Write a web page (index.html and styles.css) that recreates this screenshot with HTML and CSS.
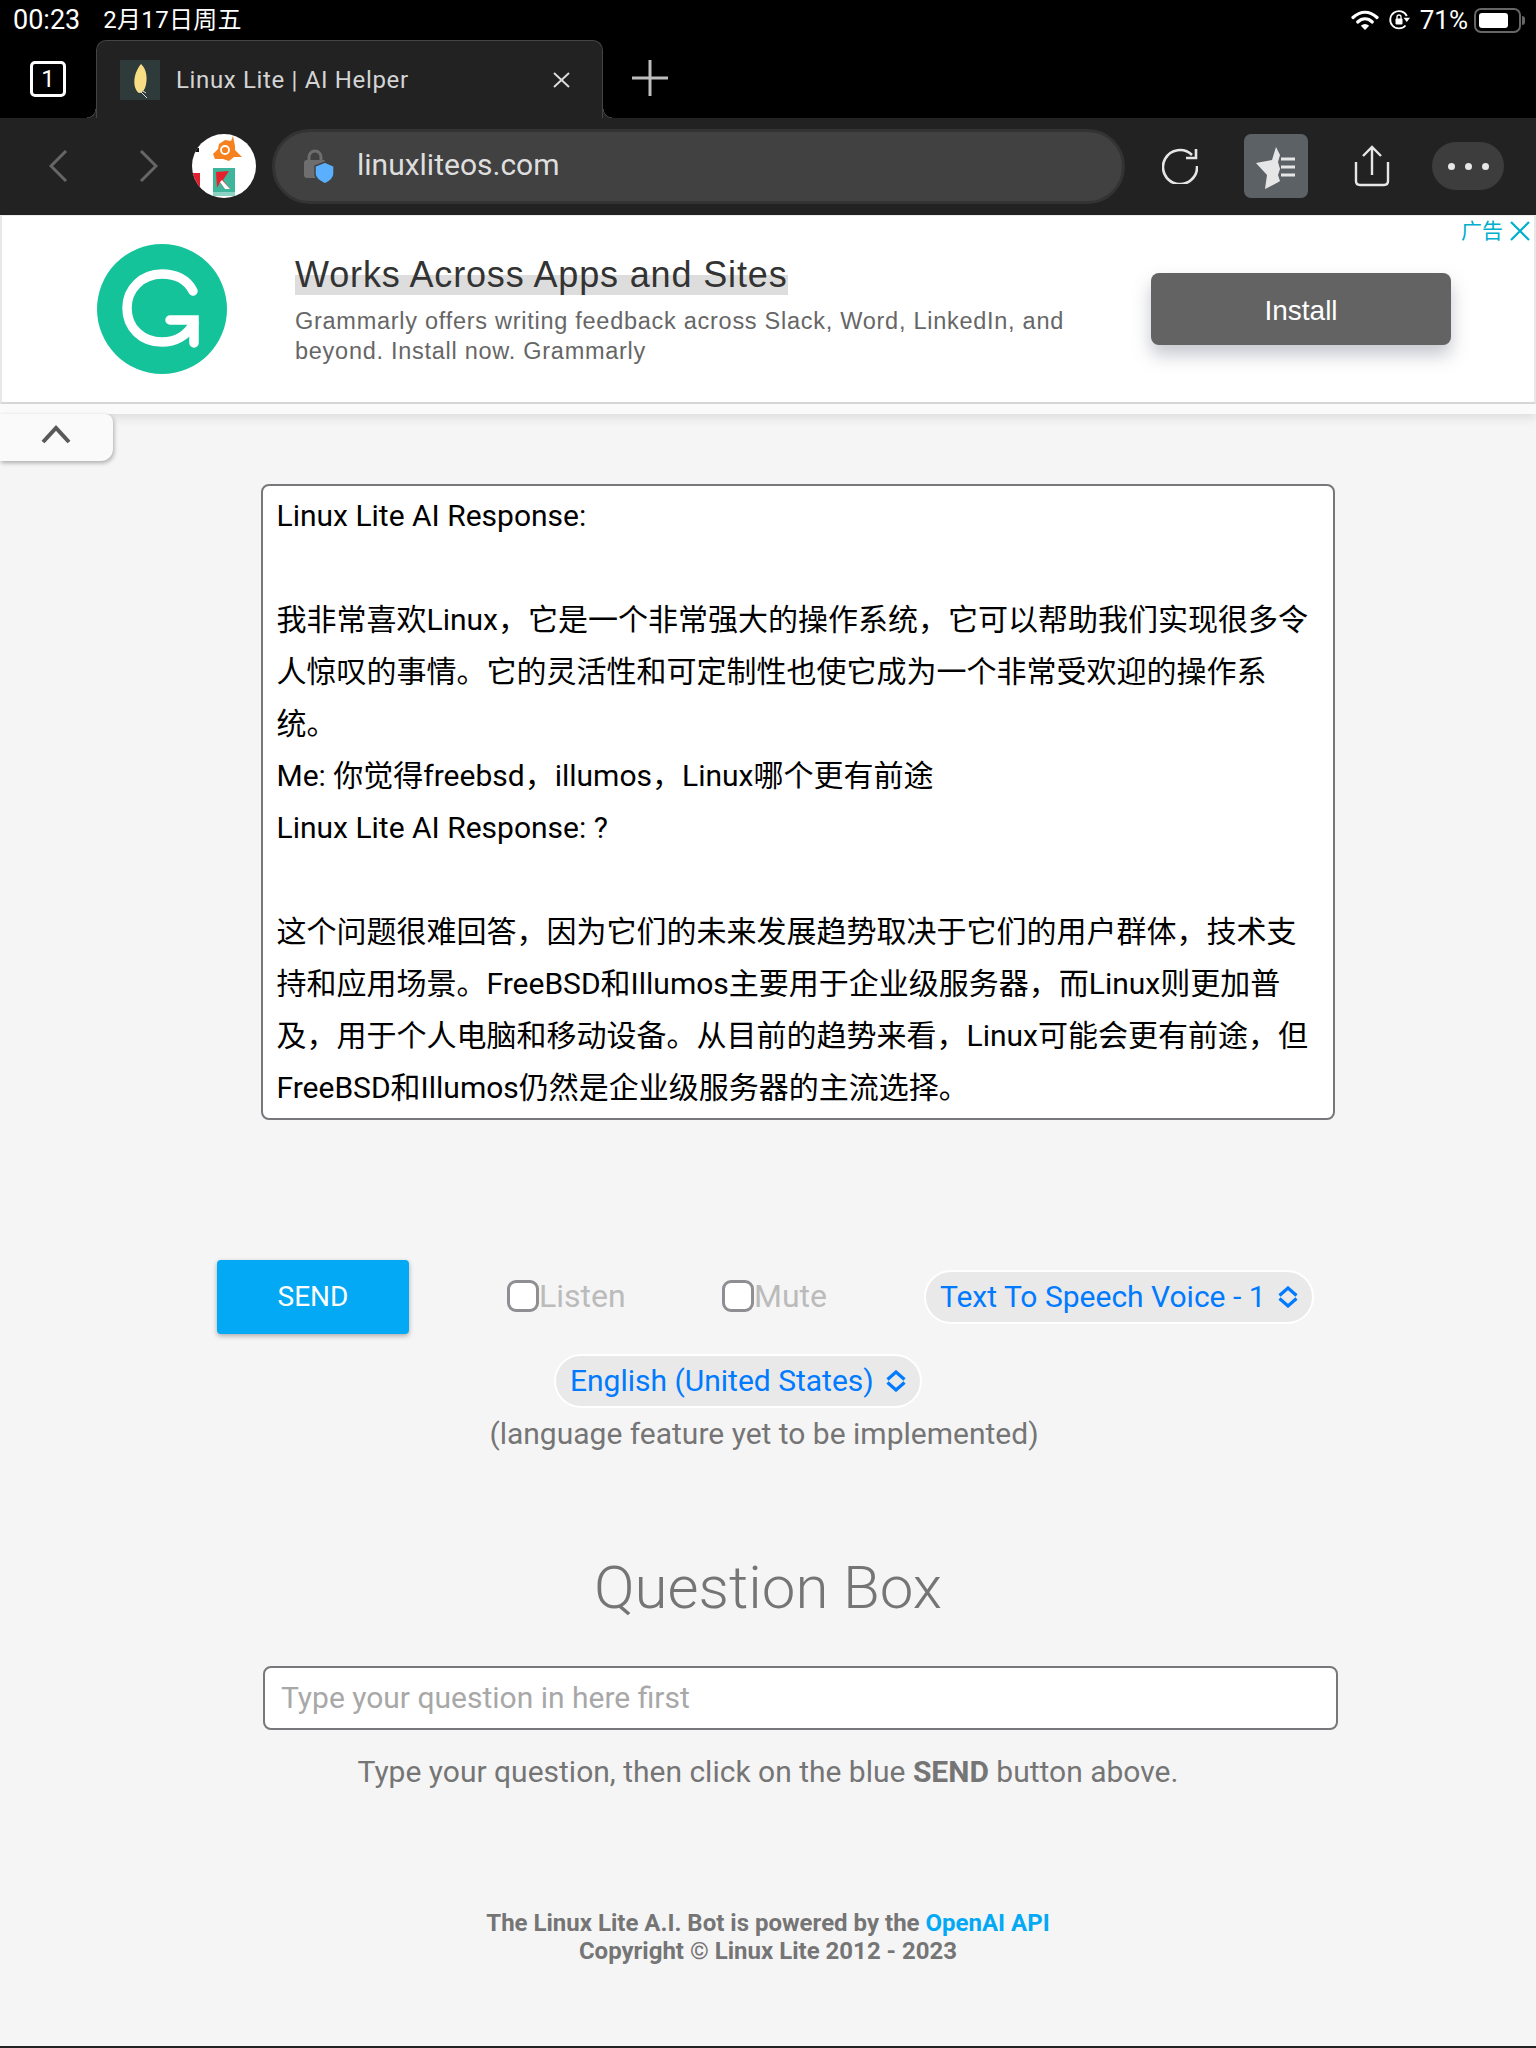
FILE: index.html
```html
<!DOCTYPE html>
<html lang="zh">
<head>
<meta charset="utf-8">
<title>Linux Lite | AI Helper</title>
<link rel="stylesheet" href="styles.css">
</head>
<body>
<div class="status">
  <div class="status-time"><span class="clock">00:23</span><span class="date">2月17日周五</span></div>
  <div class="status-right">
    <svg class="ico-wifi" viewBox="0 0 28 22"><path d="M2 8.500C9.500 1.500 18.500 1.500 26 8.500" fill="none" stroke="#fff" stroke-width="3.200" stroke-linecap="round"/><path d="M6.700 13C11.200 8.900 16.800 8.900 21.300 13" fill="none" stroke="#fff" stroke-width="3.200" stroke-linecap="round"/><path d="M9.800 16.800Q14 13 18.200 16.800L14 21Z" fill="#fff"/></svg>
    <svg class="ico-rot" viewBox="0 0 22 22"><path d="M17.500 16.500A8.700 8.700 0 1 1 18.800 7" fill="none" stroke="#fff" stroke-width="1.800"/><path d="M15.500 8.800H22L18.800 13Z" fill="#fff"/><rect x="7.500" y="9.500" width="7" height="6" rx="1" fill="#fff"/><path d="M9 10V8a2 2 0 0 1 4 0v2" fill="none" stroke="#fff" stroke-width="1.300"/></svg>
    <span class="pct">71%</span>
    <div class="battery"><div class="battery-fill"></div></div>
    <div class="battery-nub"></div>
  </div>
</div>

<div class="tabs">
  <div class="tab-count">1</div>
  <div class="tab">
    <div class="favicon"><svg viewBox="0 0 40 40"><path d="M21 4C27 9 28 20 25 28C24 31 21 33 19 33C13 29 12 15 21 4Z" fill="#f7dd84"/><path d="M19 30L27 38M23 31L26 33" stroke="#ddd" stroke-width="1"/></svg></div>
    <span class="tab-title">Linux Lite | AI Helper</span>
    <svg class="tab-close" viewBox="0 0 17 16"><path d="M1 1L16 15M16 1L1 15" stroke="#ddd" stroke-width="1.900"/></svg>
  </div>
  <svg class="tab-plus" viewBox="0 0 36 36"><path d="M18 0V36M0 18H36" stroke="#bdbdbd" stroke-width="3"/></svg>
</div>

<div class="toolbar">
  <svg class="chev chev-back" viewBox="0 0 19 32"><path d="M17 1L2 16L17 31" fill="none" stroke="#666" stroke-width="3"/></svg>
  <svg class="chev chev-fwd" viewBox="0 0 19 32"><path d="M2 1L17 16L2 31" fill="none" stroke="#666" stroke-width="3"/></svg>
  <div class="ext">
    <svg viewBox="0 0 64 64">
      <rect x="3" y="14" width="4" height="4" fill="#111"/>
      <rect x="0" y="39" width="8" height="15" fill="#e0202c"/>
      <path d="M33 6L39 7L41 2L43 12L43 16L50 23L42 23L37 27L31 25L23 25L21 20L26 15L27 10Z" fill="#f5821f"/>
      <circle cx="33" cy="16" r="4" fill="none" stroke="#fff" stroke-width="1.800"/>
      <rect x="21" y="34" width="22" height="24" fill="#3fb59c"/>
      <path d="M24 38L37 37L31 46L38 55L33 55L28 48L25 54Z" fill="#e8202c"/>
      <path d="M30 46L38 55L33 55L28 48Z" fill="#fff"/>
      <rect x="21" y="58" width="22" height="4" fill="#3fb59c" opacity="0.600"/>
    </svg>
  </div>
  <div class="url">
    <svg class="lock" viewBox="0 0 30 35"><rect x="0" y="11" width="22" height="18" rx="3" fill="#6e6e6e"/><path d="M5 12V8a6 6 0 0 1 12 0v4" fill="none" stroke="#6e6e6e" stroke-width="3"/><path d="M21 13L30 17V25C30 30 25 33 21 35C17 33 11 30 11 25V17Z" fill="#5ab0ff" stroke="#414141" stroke-width="1.500"/></svg>
    <span class="url-text">linuxliteos.com</span>
  </div>
  <svg class="reload" viewBox="0 0 36 36"><path d="M30 7A17 17 0 1 0 35 18" fill="none" stroke="#e6e6e6" stroke-width="2.600"/><path d="M24 10H34V1" fill="none" stroke="#e6e6e6" stroke-width="2.600"/></svg>
  <div class="star-btn">
    <svg viewBox="0 0 64 64"><path d="M32 13L28 26L12 29L23 41L21 55C27 52 33 49 36 47L34 41L36 35L34 28L36 21Z" fill="#e6e6e6"/><path d="M37 25H51M37 33H51M37 41H51" stroke="#e6e6e6" stroke-width="3"/></svg>
  </div>
  <svg class="share" viewBox="0 0 36 42"><path d="M18 2V30M9 11L18 2L27 11" fill="none" stroke="#e6e6e6" stroke-width="2.400"/><path d="M2 17V36Q2 40 6 40H30Q34 40 34 36V17" fill="none" stroke="#e6e6e6" stroke-width="2.400"/></svg>
  <div class="more"><i></i><i></i><i></i></div>
</div>

<div class="ad">
  <svg class="g-logo" viewBox="0 0 130 130"><circle cx="65" cy="65" r="65" fill="#15c39a"/><path d="M96 47C90 35 78 30 65 30C45 30 30 45 30 64C30 84 45 98 65 98C78 98 90 92 97 79" fill="none" stroke="#fff" stroke-width="9.500" stroke-linecap="round"/><path d="M73 76H97V99" fill="none" stroke="#fff" stroke-width="9.500" stroke-linecap="round"/></svg>
  <div class="ad-copy">
    <h2 class="ad-title"><span>Works Across Apps and Sites</span></h2>
    <p class="ad-text">Grammarly offers writing feedback across Slack, Word, LinkedIn, and<br>beyond. Install now. Grammarly</p>
  </div>
  <div class="ad-btn">Install</div>
  <div class="ad-mark"><span>广告</span><svg viewBox="0 0 20 20"><path d="M1 1L19 19M19 1L1 19" stroke="#00aecd" stroke-width="2.200"/></svg></div>
</div>
<div class="strip"></div>
<div class="collapse"><svg viewBox="0 0 30 18"><path d="M2 17L15 3L28 17" fill="none" stroke="#595959" stroke-width="4"/></svg></div>

<main class="page">
  <div class="response">Linux Lite AI Response:

我非常喜欢Linux，它是一个非常强大的操作系统，它可以帮助我们实现很多令
人惊叹的事情。它的灵活性和可定制性也使它成为一个非常受欢迎的操作系
统。
Me: 你觉得freebsd，illumos，Linux哪个更有前途
Linux Lite AI Response: ?

这个问题很难回答，因为它们的未来发展趋势取决于它们的用户群体，技术支
持和应用场景。FreeBSD和Illumos主要用于企业级服务器，而Linux则更加普
及，用于个人电脑和移动设备。从目前的趋势来看，Linux可能会更有前途，但
FreeBSD和Illumos仍然是企业级服务器的主流选择。</div>

  <div class="controls">
    <div class="send">SEND</div>
    <label class="check check-listen"><i></i>Listen</label>
    <label class="check check-mute"><i></i>Mute</label>
    <div class="select select-voice"><span class="select-text">Text To Speech Voice - 1</span><svg viewBox="0 0 20 22"><path d="M1.500 9.500L10 2L18.500 9.500M1.500 12.500L10 20L18.500 12.500" fill="none" stroke="#007aff" stroke-width="3.200"/></svg></div>
  </div>
  <div class="lang-row">
    <div class="select select-lang"><span class="select-text">English (United States)</span><svg viewBox="0 0 20 22"><path d="M1.500 9.500L10 2L18.500 9.500M1.500 12.500L10 20L18.500 12.500" fill="none" stroke="#007aff" stroke-width="3.200"/></svg></div>
  </div>
  <p class="note">(language feature yet to be implemented)</p>

  <h1 class="heading">Question Box</h1>
  <div class="question"><span class="placeholder">Type your question in here first</span></div>
  <p class="help">Type your question, then click on the blue <b>SEND</b> button above.</p>
  <footer class="foot">The Linux Lite A.I. Bot is powered by the <a>OpenAI API</a><br>Copyright © Linux Lite 2012 - 2023</footer>
</main>
<div class="bottom-line"></div>
</body>
</html>
```
FILE: styles.css
```css
* { box-sizing: border-box; }
html, body { margin: 0; padding: 0; }
body {
  width: 1536px;
  height: 2048px;
  overflow: hidden;
  background: #f5f5f5;
  font-family: Roboto, "Noto Sans CJK SC", sans-serif;
  display: flex;
  flex-direction: column;
}

/* status bar */
.status {
  height: 40px;
  background: #000;
  color: #fff;
  display: flex;
  justify-content: space-between;
  align-items: center;
  padding: 0 12px 0 13px;
  flex: none;
}
.status-time { display: flex; align-items: center; gap: 23px; }
.clock { font-size: 27px; line-height: 30px; }
.date { font-size: 24px; line-height: 30px; letter-spacing: 0.3px; }
.status-right { display: flex; align-items: center; }
.ico-wifi { width: 28px; height: 22px; margin-right: 9px; }
.ico-rot { width: 22px; height: 22px; margin-right: 10px; }
.pct { font-size: 26px; margin-right: 6px; }
.battery {
  width: 47px;
  height: 25px;
  border: 2px solid #666;
  border-radius: 7px;
  padding: 3px;
}
.battery-fill { width: 29px; height: 15px; background: #fff; border-radius: 3px; }
.battery-nub { width: 3px; height: 9px; background: #666; border-radius: 0 3px 3px 0; margin-left: 1px; margin-right: -1px; }

/* tab strip */
.tabs {
  height: 78px;
  background: #000;
  display: flex;
  align-items: flex-end;
  padding-left: 30px;
  flex: none;
}
.tab-count {
  width: 36px;
  height: 36px;
  margin-bottom: 21px;
  border: 3px solid #fff;
  border-radius: 5px;
  color: #fff;
  font-size: 24px;
  display: flex;
  align-items: center;
  justify-content: center;
  flex: none;
}
.tab {
  position: relative;
  margin-left: 30px;
  width: 507px;
  height: 78px;
  background: #222;
  border: 1.500px solid #444;
  border-bottom: 0;
  border-radius: 10px 10px 0 0;
  display: flex;
  align-items: center;
  padding: 0 32px 0 23px;
  flex: none;
}
.tab::before,
.tab::after {
  content: "";
  position: absolute;
  bottom: 0;
  width: 9px;
  height: 9px;
}
.tab::before {
  left: -10px;
  background: radial-gradient(circle at 0 0, transparent 8px, #444 8.500px, #222 9.500px);
}
.tab::after {
  right: -10px;
  background: radial-gradient(circle at 100% 0, transparent 8px, #444 8.500px, #222 9.500px);
}
.favicon { width: 40px; height: 40px; background: #2f3a3a; flex: none; }
.favicon svg { width: 40px; height: 40px; display: block; }
.tab-title { margin-left: 16px; font-size: 24px; color: #d4d4d4; flex: 1; letter-spacing: 0.65px; }
.tab-close { width: 17px; height: 16px; }
.tab-plus { width: 36px; height: 36px; margin: 0 0 22px 29px; }

/* toolbar */
.toolbar {
  height: 97px;
  padding-bottom: 1px;
  background: #222;
  display: flex;
  align-items: center;
  flex: none;
}
.chev { width: 19px; height: 32px; flex: none; }
.chev-back { margin-left: 49px; }
.chev-fwd { margin-left: 71px; }
.ext {
  width: 64px;
  height: 64px;
  margin-left: 34px;
  border-radius: 50%;
  background: #fff;
  overflow: hidden;
  flex: none;
}
.ext svg { width: 64px; height: 64px; display: block; }
.url {
  width: 853px;
  height: 75px;
  margin-left: 16px;
  background: #414141;
  border: 3px solid #333;
  border-radius: 38px;
  display: flex;
  align-items: center;
  padding-left: 29px;
  color: #dedede;
  font-size: 30px;
  flex: none;
}
.url-text { padding-bottom: 3px; }
.lock { width: 30px; height: 35px; margin-right: 23px; flex: none; }
.reload { width: 36px; height: 36px; margin-left: 37px; flex: none; }
.star-btn {
  width: 64px;
  height: 64px;
  margin-left: 46px;
  background: #5c6166;
  border-radius: 7px;
  flex: none;
}
.star-btn svg { width: 64px; height: 64px; display: block; }
.share { width: 36px; height: 42px; margin-left: 46px; flex: none; }
.more {
  width: 72px;
  height: 48px;
  margin-left: 42px;
  background: #3d3d3d;
  border-radius: 24px;
  display: flex;
  justify-content: center;
  align-items: center;
  gap: 10px;
  flex: none;
}
.more i { width: 7px; height: 7px; border-radius: 50%; background: #e6e6e6; }

/* ad */
.ad {
  height: 189px;
  background: #fff;
  border-left: 2px solid #e8e8e8;
  border-right: 2px solid #e8e8e8;
  border-bottom: 2px solid #d9d9d9;
  border-top: 1px solid #eee;
  display: flex;
  align-items: center;
  position: relative;
  flex: none;
}
.g-logo { width: 130px; height: 130px; margin-left: 95px; flex: none; }
.ad-copy { margin-left: 68px; width: 856px; padding-top: 1px; font-family: "Liberation Sans", Arial, sans-serif; }
.ad-title { margin: 0 0 9px; font-weight: 400; font-size: 36px; line-height: 44px; color: #333; letter-spacing: 0.85px; }
.ad-title span { background: linear-gradient(transparent 50%, #ddd 50%); }
.ad-text { margin: 0; font-size: 23.500px; line-height: 30px; color: #666; letter-spacing: 0.73px; }
.ad-btn {
  width: 300px;
  height: 72px;
  padding-top: 3px;
  background: #636363;
  color: #fff;
  font-family: "Liberation Sans", Arial, sans-serif;
  font-size: 28px;
  border-radius: 8px;
  display: flex;
  align-items: center;
  justify-content: center;
  box-shadow: 0 10px 18px rgba(90, 95, 115, 0.35);
  flex: none;
}
.ad-mark {
  position: absolute;
  top: 3px;
  right: 4px;
  display: flex;
  align-items: center;
  gap: 7px;
  color: #00aecd;
  font-size: 21px;
  line-height: 24px;
}
.ad-mark svg { width: 20px; height: 20px; }

.strip {
  height: 10px;
  background: #fafafa;
  box-shadow: 0 4px 10px rgba(0, 0, 0, 0.1);
  flex: none;
  position: relative;
}
.collapse {
  width: 113px;
  height: 47px;
  background: #fafafa;
  border-radius: 0 8px 12px 0;
  box-shadow: 1px 2px 4px rgba(0, 0, 0, 0.3);
  display: flex;
  align-items: center;
  justify-content: center;
  padding: 0 2px 8px 0;
  flex: none;
  position: relative;
}
.collapse svg { width: 30px; height: 18px; }

/* page */
.page { flex: 1; margin-top: 23px; color: #757575; }
.response {
  width: 1074px;
  height: 636px;
  margin-left: 261px;
  padding: 3.500px 13.500px;
  background: #fff;
  border: 2px solid #77777c;
  border-radius: 8px;
  color: #000;
  font-size: 30px;
  line-height: 52px;
  white-space: pre;
  overflow: hidden;
}
.controls {
  height: 74px;
  margin-top: 140px;
  padding-left: 217px;
  display: flex;
  align-items: center;
}
.send {
  width: 192px;
  height: 74px;
  padding-bottom: 1px;
  background: #03a9f4;
  color: #fff;
  border-radius: 4px;
  font-size: 28px;
  display: flex;
  align-items: center;
  justify-content: center;
  box-shadow: 0 2px 5px rgba(0, 0, 0, 0.3);
  flex: none;
}
.check {
  display: flex;
  align-items: center;
  color: #bbb;
  font-size: 32px;
  margin-top: -3px;
  flex: none;
}
.check i {
  width: 32px;
  height: 32px;
  border: 3px solid #8e8e93;
  border-radius: 9px;
  background: #fff;
  margin-right: 0;
}
.check-listen { margin-left: 98px; width: 215px; }
.check-mute { width: 202px; }
.select {
  height: 54px;
  background: #e9e9e9;
  border: 2px solid #fff;
  border-radius: 27px;
  color: #007aff;
  font-size: 30px;
  display: flex;
  align-items: center;
  justify-content: space-between;
  padding: 0 14px;
  flex: none;
}
.select svg { width: 20px; height: 22px; flex: none; }
.select-text { padding-bottom: 1px; }
.select-voice { width: 390px; }
.select-lang { width: 368px; }
.lang-row { margin-top: 20px; padding-left: 554px; display: flex; }
.note { margin: 7px 0 0; text-align: center; padding-right: 8px; font-size: 30px; line-height: 38px; }
.heading { margin: 99px 0 0; text-align: center; font-size: 60px; line-height: 72px; font-weight: 300; }
.question {
  width: 1075px;
  height: 64px;
  margin: 42px 0 0 263px;
  padding-left: 16px;
  background: #fff;
  border: 2px solid #77777c;
  border-radius: 8px;
  color: #a8a8a8;
  font-size: 30px;
  display: flex;
  align-items: center;
}
.placeholder { padding-bottom: 2px; }
.help { margin: 23px 0 0; text-align: center; font-size: 30px; line-height: 38px; }
.help b { font-weight: 700; }
.foot { margin-top: 118px; text-align: center; font-size: 24px; line-height: 28px; font-weight: 700; }
.foot a { color: #03a9f4; }
.bottom-line { height: 2px; background: #222; flex: none; }
```
